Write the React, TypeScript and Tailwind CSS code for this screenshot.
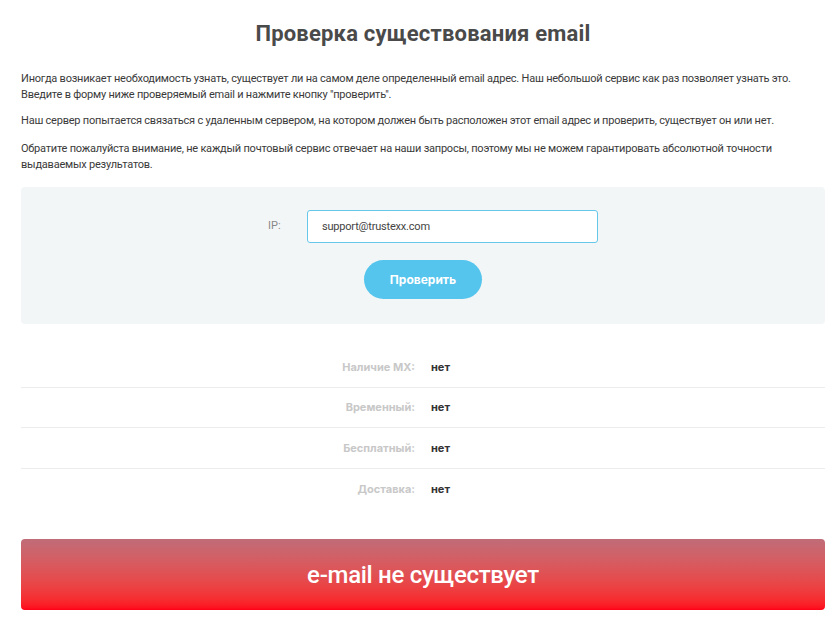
export default function App() {
  const rows = [
    { label: 'Наличие MX:', value: 'нет' },
    { label: 'Временный:', value: 'нет' },
    { label: 'Бесплатный:', value: 'нет' },
    { label: 'Доставка:', value: 'нет' },
  ];

  return (
    <div className="min-h-[617px] bg-white pl-[21px] pr-[12px] pb-2 text-[#333]" style={{ fontFamily: 'Roboto, "Open Sans", sans-serif' }}>
      <h1 className="pt-[20px] text-center text-[22px] font-bold leading-[28px] tracking-[0.2px] text-[#4a4a4a]">
        Проверка существования email
      </h1>

      <div className="mt-[23px] text-[11px] leading-[16px] tracking-[-0.22px] text-[#3a3a3a]">
        <p>
          Иногда возникает необходимость узнать, существует ли на самом деле определенный email адрес. Наш небольшой сервис как раз позволяет узнать это.
          <br />
          Введите в форму ниже проверяемый email и нажмите кнопку "проверить".
        </p>
        <p className="mt-[10px]">
          Наш сервер попытается связаться с удаленным сервером, на котором должен быть расположен этот email адрес и проверить, существует он или нет.
        </p>
        <p className="mt-[12px] pr-[20px]">
          Обратите пожалуйста внимание, не каждый почтовый сервис отвечает на наши запросы, поэтому мы не можем гарантировать абсолютной точности выдаваемых результатов.
        </p>
      </div>

      <div className="mt-[14px] flex h-[137px] flex-col items-center rounded-[4px] bg-[#f3f6f7] pt-[23px]">
        <div className="flex items-center">
          <label className="w-[59px] pl-[20px] text-[11px] text-[#888]">IP:</label>
          <input
            defaultValue="support@trustexx.com"
            className="h-[33px] w-[291px] rounded-[3px] border border-[#66c7ea] bg-white px-[14px] text-[11px] tracking-[-0.2px] text-[#444] outline-none"
          />
        </div>
        <button
          className="mt-[17px] h-[39px] w-[118px] rounded-full bg-[#56c5ed] text-[12px] font-bold text-white"
          style={{ fontFamily: 'Inter, sans-serif' }}
        >
          Проверить
        </button>
      </div>

      <div className="mt-[23px]" style={{ fontFamily: 'Inter, sans-serif' }}>
        {rows.map((r, i) => (
          <div
            key={r.label}
            className={`flex h-[40.5px] items-center text-[11px] font-bold ${i < rows.length - 1 ? 'border-b border-[#ececec]' : ''}`}
          >
            <div className="w-[394px] text-right text-[#c8c8c8]">{r.label}</div>
            <div className="pl-[16px] text-[#333]">{r.value}</div>
          </div>
        ))}
      </div>

      <div className="mt-[30px] flex h-[71px] items-center justify-center rounded-[4px] bg-gradient-to-b from-[#c06c78] to-[#ff0018]">
        <span className="text-[24px] font-medium tracking-[-0.3px] text-white">e-mail не существует</span>
      </div>
    </div>
  );
}
